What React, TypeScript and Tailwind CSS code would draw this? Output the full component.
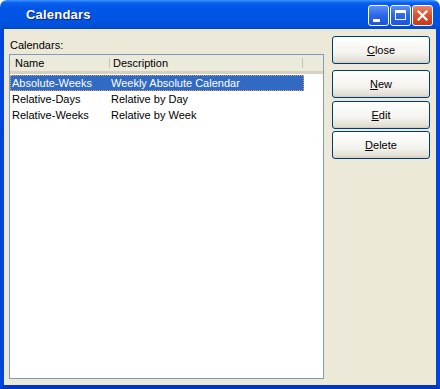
import React from 'react';

const font = { fontFamily: '"Liberation Sans", Arial, sans-serif' };

const rows = [
  { name: 'Absolute-Weeks', desc: 'Weekly Absolute Calendar', selected: true },
  { name: 'Relative-Days', desc: 'Relative by Day' },
  { name: 'Relative-Weeks', desc: 'Relative by Week' },
];

const XpButton: React.FC<{ label: string; className?: string }> = ({ label, className }) => (
  <button
    className={`h-[28px] w-[98px] rounded-[3px] border border-[#003C74] bg-[linear-gradient(#ffffff,#f4f3ee_60%,#e3e0d6_90%,#d6d0c5)] text-[11px] text-black shadow-[inset_0_-1px_0_#d6d0c5] ${className ?? ''}`}
  >
    <span className="underline underline-offset-[1px]">{label[0]}</span>
    {label.slice(1)}
  </button>
);

export default function App() {
  return (
    <div className="w-[440px] h-[389px] flex flex-col bg-white" style={font}>
      {/* Title bar */}
      <div className="h-[29px] shrink-0 rounded-t-[7px] bg-[linear-gradient(#3d95ff_0%,#0a5fef_10%,#0055e5_30%,#0054e3_70%,#0050d8_90%,#0046c8_100%)] flex items-center pl-[26px] pr-[7px]">
        <span className="text-[13px] font-bold text-white tracking-[0.2px] [text-shadow:1px_1px_0_#0a1e9a] flex-1">Calendars</span>
        <div className="flex gap-[1px] mt-[1px]">
          <div className="w-[21px] h-[21px] rounded-[3px] border border-white bg-[linear-gradient(#5c8ff5,#2c66e8_50%,#1c53da)] relative">
            <div className="absolute left-[4px] top-[13px] w-[7px] h-[3px] bg-white" />
          </div>
          <div className="w-[21px] h-[21px] rounded-[3px] border border-white bg-[linear-gradient(#5c8ff5,#2c66e8_50%,#1c53da)] relative">
            <div className="absolute left-[4px] top-[4px] w-[11px] h-[10px] border border-white border-t-[3px]" />
          </div>
          <div className="w-[21px] h-[21px] rounded-[3px] border border-white bg-[linear-gradient(#e8866a,#d9512f_50%,#c53a1c)] flex items-center justify-center">
            <svg width="11" height="11" viewBox="0 0 11 11">
              <path d="M1.5 1.5 L9.5 9.5 M9.5 1.5 L1.5 9.5" stroke="white" strokeWidth="2.2" strokeLinecap="square" />
            </svg>
          </div>
        </div>
      </div>

      {/* Body */}
      <div className="flex-1 min-h-0 border-x-4 border-b-4 border-x-[#0046dc] border-b-[#0036c0] bg-[#ECE9D8] flex gap-[8px] px-[5px] pb-[6px]">
        <div className="w-[315px] flex flex-col pt-[10px]">
          <div className="h-[13px] text-[11px] leading-[13px] text-black pl-[1px]">Calendars:</div>
          <div className="mt-[2px] flex-1 border border-[#7F9DB9] bg-white flex flex-col">
            <div className="h-[19px] shrink-0 flex bg-[#EBEADB] border-b-[3px] border-b-[#D6D2C2] text-[11px] text-black">
              <div className="w-[100px] flex items-center pl-[5px] border-r border-r-[#C7C5B2] my-[3px]">Name</div>
              <div className="w-[193px] flex items-center pl-[3px] border-r border-r-[#C7C5B2] my-[3px]">Description</div>
              <div className="flex-1" />
            </div>
            <div className="pt-[1px]">
              {rows.map((r) => (
                <div
                  key={r.name}
                  className={`w-[294px] h-[16px] flex items-center text-[11px] leading-[16px] ${
                    r.selected ? 'bg-[#316AC5] text-white outline outline-1 outline-dotted outline-[#e3a15a] -outline-offset-1' : 'text-black'
                  }`}
                >
                  <span className="w-[100px] pl-[2px]">{r.name}</span>
                  <span className="pl-[1px]">{r.desc}</span>
                </div>
              ))}
            </div>
          </div>
        </div>

        <div className="flex flex-col pt-[7px]">
          <XpButton label="Close" />
          <XpButton label="New" className="mt-[6px]" />
          <XpButton label="Edit" className="mt-[3px]" />
          <XpButton label="Delete" className="mt-[2px]" />
        </div>
      </div>
    </div>
  );
}
